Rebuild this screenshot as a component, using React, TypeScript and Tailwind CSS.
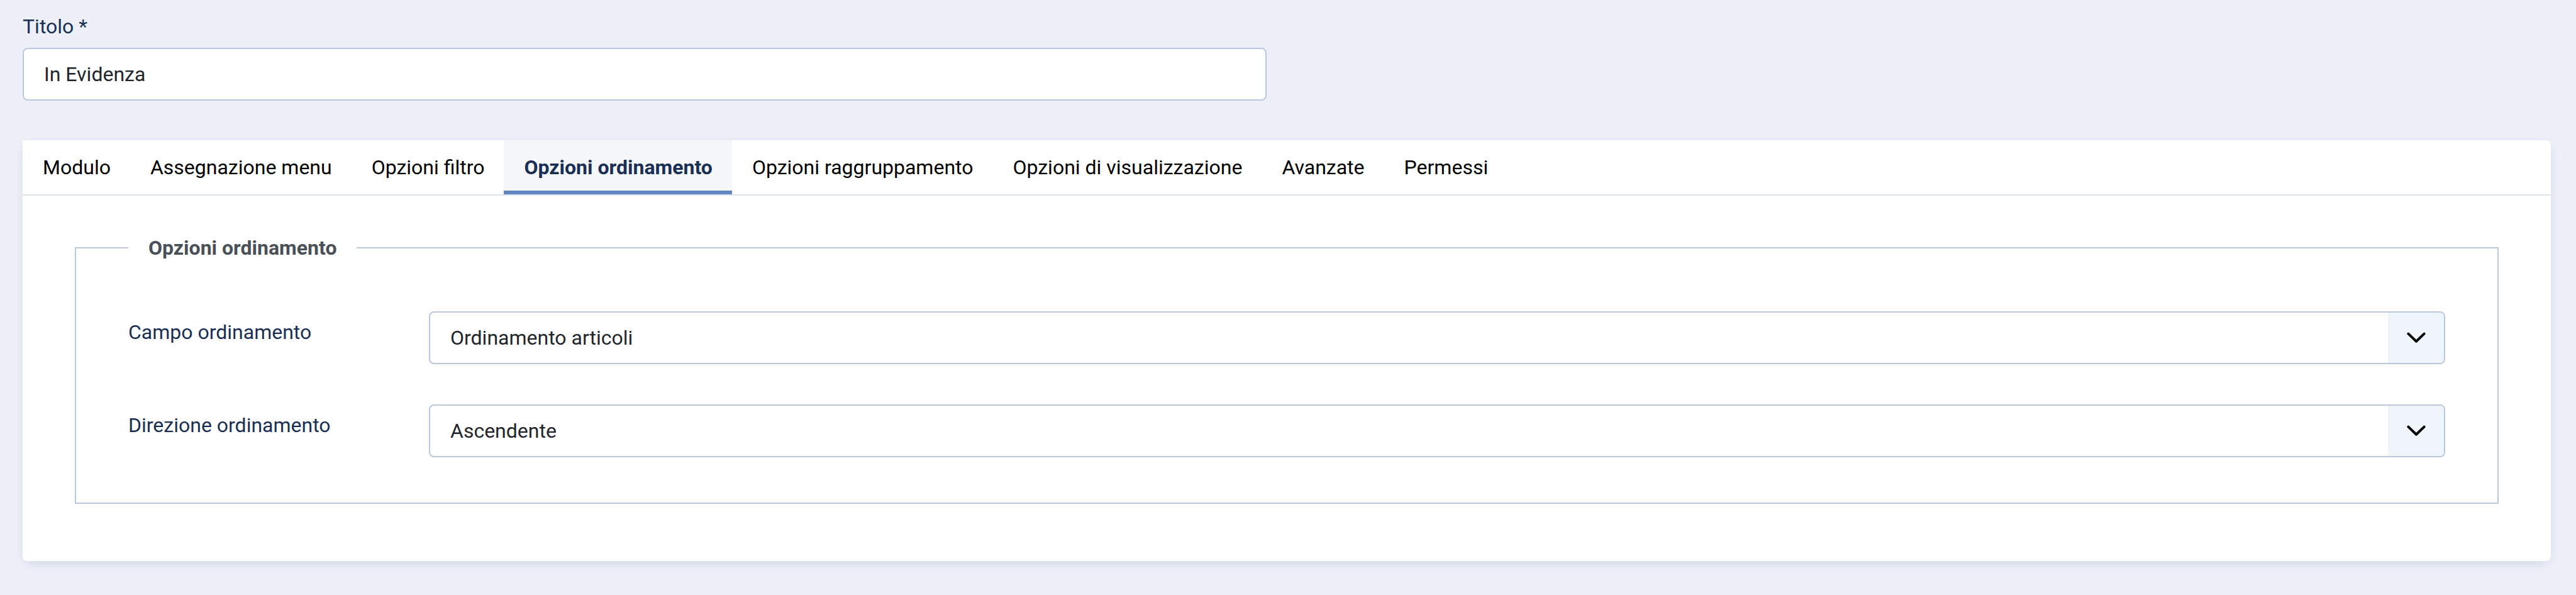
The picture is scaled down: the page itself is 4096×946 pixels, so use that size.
import { useState } from "react";

const tabs = [
  "Modulo",
  "Assegnazione menu",
  "Opzioni filtro",
  "Opzioni ordinamento",
  "Opzioni raggruppamento",
  "Opzioni di visualizzazione",
  "Avanzate",
  "Permessi",
];

type SelectFieldProps = { id: string; label: string; options: string[] };

function SelectField({ id, label, options }: SelectFieldProps) {
  return (
    <div className="flex items-start">
      <label htmlFor={id} className="w-[478px] shrink-0 pt-[9px] text-[#1a2f54]">
        {label}
      </label>
      <div className="relative flex-1">
        <select
          id={id}
          className="block h-[84px] w-full appearance-none rounded-lg border-2 border-[#b9c7df] bg-white pl-8 pr-[108px] text-[#22262a]"
        >
          {options.map((o) => (
            <option key={o}>{o}</option>
          ))}
        </select>
        <span className="pointer-events-none absolute inset-y-0.5 right-0.5 flex w-[89px] items-center justify-center rounded-r-md bg-[#f0f4fb]">
          <svg width="30" height="18" viewBox="0 0 30 18" fill="none" aria-hidden="true">
            <path
              d="M2.4 2.6 15 14.8 27.6 2.6"
              stroke="#000"
              strokeWidth="4"
              strokeLinecap="round"
              strokeLinejoin="round"
            />
          </svg>
        </span>
      </div>
    </div>
  );
}

export default function App() {
  const [active, setActive] = useState("Opzioni ordinamento");
  const [title, setTitle] = useState("In Evidenza");

  return (
    <div className="min-h-screen bg-[#edf0f9] pt-[18px] pr-10 pb-10 pl-9 font-['Roboto',sans-serif] text-[32px] leading-[48px]">
      <div className="w-[49.2%]">
        <label htmlFor="title" className="mb-2.5 block text-[#1a2f54]">
          Titolo *
        </label>
        <input
          id="title"
          type="text"
          required
          value={title}
          onChange={(e) => setTitle(e.target.value)}
          className="block h-[84px] w-full rounded-lg border-2 border-[#b9c7df] bg-white px-8 text-[#22262a]"
        />
      </div>

      <main className="mt-[63px] rounded-lg rounded-tl-none bg-white shadow-[0_8px_20px_-8px_rgba(25,50,100,0.14),0_2px_20px_rgba(25,50,100,0.04)]">
        <div role="tablist" className="flex border-b-2 border-[#dee3f0]">
          {tabs.map((t) => (
            <button
              key={t}
              type="button"
              role="tab"
              aria-selected={t === active}
              onClick={() => setActive(t)}
              className={
                t === active
                  ? "bg-[#f5f7fb] py-[19px] pr-[31px] pl-8 font-bold text-[#1a2f54] shadow-[inset_0_-6px_0_#6185c1]"
                  : "py-[19px] pr-[31px] pl-8 text-black"
              }
            >
              {t}
            </button>
          ))}
        </div>

        <div className="px-[83px] pt-[59px] pb-[91px]">
          <fieldset className="border-2 border-[#b9c7df] px-[83px] pb-[72px]">
            <legend className="px-8 font-bold text-[#495057]">Opzioni ordinamento</legend>
            <div className="flex flex-col gap-16 pt-[77px]">
              <SelectField
                id="ordering"
                label="Campo ordinamento"
                options={["Ordinamento articoli", "Titolo", "Data creazione"]}
              />
              <SelectField
                id="direction"
                label="Direzione ordinamento"
                options={["Ascendente", "Discendente"]}
              />
            </div>
          </fieldset>
        </div>
      </main>
    </div>
  );
}
